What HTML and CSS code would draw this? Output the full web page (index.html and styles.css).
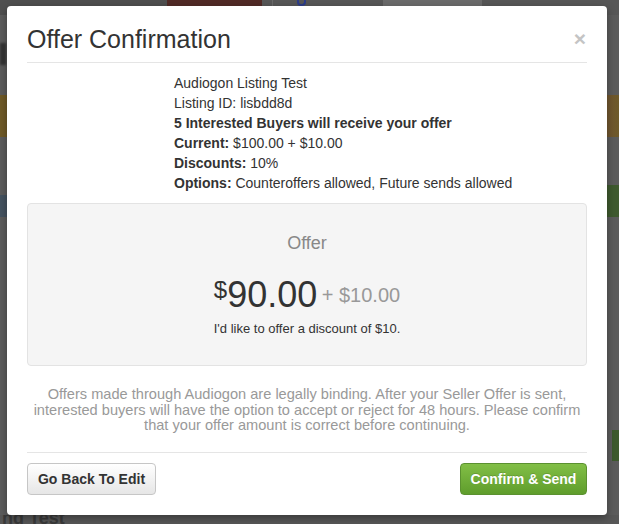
FILE: index.html
```html
<!DOCTYPE html>
<html>
<head>
<meta charset="utf-8">
<title>Offer Confirmation</title>
<link rel="stylesheet" href="styles.css">
</head>
<body>
<div class="page">
  <div class="topnav">
    <span class="nav-dark"></span>
    <span class="nav-red"></span>
    <span class="nav-item"><span class="nav-g"></span></span>
    <span class="nav-light"></span>
  </div>
  <div class="row row-title"><span class="page-letter"></span></div>
  <div class="band"></div>
  <div class="row row-mid">
    <span class="blob blob-blue"></span>
    <span class="blob blob-green"></span>
  </div>
  <div class="row row-low">
    <span class="blob blob-green2"></span>
  </div>
  <div class="page-foot">ng Test</div>
</div>

<div class="modal">
  <div class="modal-header">
    <h4 class="modal-title">Offer Confirmation</h4>
    <span class="close">&times;</span>
  </div>
  <div class="modal-body">
    <div class="listing">
      <div>Audiogon Listing Test</div>
      <div>Listing ID: lisbdd8d</div>
      <div><b>5 Interested Buyers will receive your offer</b></div>
      <div><b>Current:</b> $100.00 + $10.00</div>
      <div><b>Discounts:</b> 10%</div>
      <div><b>Options:</b> Counteroffers allowed, Future sends allowed</div>
    </div>
    <div class="well">
      <div class="well-label">Offer</div>
      <div class="price"><span class="cur">$</span><span class="amount">90.00</span> <span class="ship">+ $10.00</span></div>
      <div class="note">I'd like to offer a discount of $10.</div>
    </div>
    <p class="disclaimer">Offers made through Audiogon are legally binding. After your Seller Offer is sent, interested buyers will have the option to accept or reject for 48 hours. Please confirm that your offer amount is correct before continuing.</p>
  </div>
  <div class="modal-footer">
    <button class="btn btn-default">Go Back To Edit</button>
    <button class="btn btn-success">Confirm &amp; Send</button>
  </div>
</div>
</body>
</html>
```
FILE: styles.css
```css
html, body {
  margin: 0;
  padding: 0;
  width: 619px;
  height: 524px;
  overflow: hidden;
  background: #5a5a5a;
  font-family: "Liberation Sans", Arial, Helvetica, sans-serif;
}

.page {
  display: flex;
  flex-direction: column;
  height: 524px;
  background: #5c5c5c;
}

.topnav {
  display: flex;
  height: 15px;
  background: #575757;
  flex: none;
}
.nav-dark { width: 167px; background: #4f4f4f; }
.nav-red { width: 95px; background: #512a26; }
.nav-item {
  width: 86px;
  border-left: 1px solid #6a6a6a;
  margin-left: 10px;
  padding-left: 24px;
}
.nav-g {
  display: block;
  width: 5px;
  height: 4px;
  border: 2px solid #2c3d8a;
  border-top: none;
  border-radius: 0 0 4px 4px;
}
.nav-light { width: 99px; background: #6b6b6b; }

.row-title {
  height: 80px;
  flex: none;
}
.page-letter {
  display: block;
  width: 6px;
  height: 22px;
  margin-top: 28px;
  background: #343434;
  filter: blur(1px);
}
.band {
  height: 42px;
  flex: none;
  background: linear-gradient(90deg, #6f5a27 0%, #6f5a27 60%, #7a4d45 92%, #6e5a2a 100%);
}
.row-mid {
  height: 250px;
  flex: none;
  display: flex;
  justify-content: space-between;
  align-items: flex-start;
}
.blob { display: block; }
.blob-blue { width: 7px; height: 22px; margin-top: 58px; background: #455360; }
.blob-green { width: 12px; height: 32px; margin-top: 48px; background: #3f5a2f; }
.row-low {
  flex: 1;
  display: flex;
  justify-content: flex-end;
}
.blob-green2 { width: 7px; height: 31px; margin-top: 43px; background: #3d5a2d; }
.page-foot {
  height: 9px;
  flex: none;
  font-size: 18px;
  line-height: 6px;
  font-weight: bold;
  color: #3a3a3a;
  overflow: hidden;
  padding-left: 2px;
  background: #575757;
}

/* Modal overlay */
.modal {
  position: absolute;
  top: 6px;
  left: 7px;
  width: 600px;
  height: 509px;
  background: #fff;
  border-radius: 4px;
  box-shadow: 0 3px 9px rgba(0,0,0,0.35);
  display: flex;
  flex-direction: column;
  color: #333;
}

.modal-header {
  display: flex;
  align-items: center;
  justify-content: space-between;
  margin: 0 20px;
  padding: 20px 0 10px;
  border-bottom: 1px solid #e5e5e5;
}
.modal-title {
  margin: 0;
  font-size: 25px;
  line-height: 26px;
  font-weight: normal;
  color: #333;
}
.close {
  font-size: 21px;
  line-height: 20px;
  font-weight: bold;
  color: #c4c4c4;
  margin-right: 1px;
}

.modal-body {
  flex: 1;
  padding: 10px 20px 0;
}
.listing {
  padding-left: 147px;
  font-size: 14px;
  line-height: 20px;
  color: #333;
}
.well {
  margin-top: 10px;
  background: #f5f5f5;
  border: 1px solid #e3e3e3;
  border-radius: 4px;
  padding: 29px 19px 27px;
  text-align: center;
  height: 105px;
}
.well-label {
  font-size: 18px;
  line-height: 20px;
  color: #888;
}
.price {
  margin-top: 22px;
  line-height: 40px;
  height: 40px;
  color: #333;
}
.cur {
  font-size: 24px;
  vertical-align: top;
  line-height: 30px;
}
.amount {
  font-size: 36px;
}
.ship {
  font-size: 20px;
  color: #999;
  vertical-align: 5px;
}
.note {
  margin-top: 5px;
  font-size: 13px;
  line-height: 18px;
  color: #333;
}
.disclaimer {
  margin: 21px 0 0;
  font-size: 14.6px;
  line-height: 15.5px;
  text-align: center;
  color: #999;
}

.modal-footer {
  display: flex;
  justify-content: space-between;
  margin: 0 20px;
  padding: 10px 0 20px;
  border-top: 1px solid #e5e5e5;
}
.btn {
  font-family: "Liberation Sans", Arial, Helvetica, sans-serif;
  font-size: 14px;
  font-weight: bold;
  height: 32px;
  padding: 0;
  white-space: nowrap;
  border-radius: 4px;
  cursor: pointer;
}
.btn-default {
  width: 129px;
  color: #333;
  background: linear-gradient(#fff, #e6e6e6);
  border: 1px solid #c6c6c6;
}
.btn-success {
  width: 127px;
  color: #fff;
  background: linear-gradient(#82bf46, #5f9d2c);
  border: 1px solid #5b9130;
  text-shadow: 0 -1px 0 rgba(0,0,0,0.15);
}
```
